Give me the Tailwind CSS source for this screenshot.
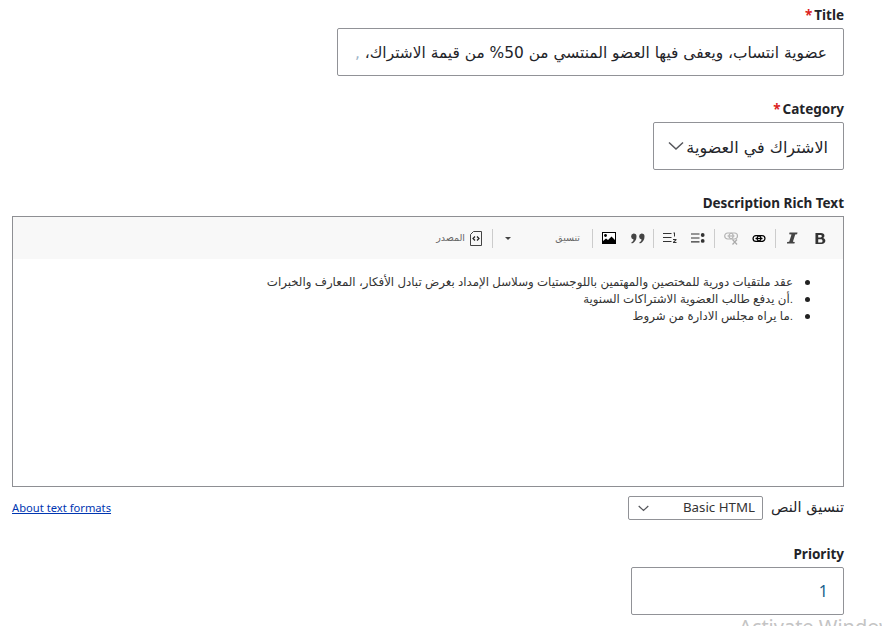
<!DOCTYPE html>
<html lang="ar" dir="rtl">
<head>
<meta charset="utf-8">
<script src="https://cdn.jsdelivr.net/npm/@tailwindcss/browser@4"></script>
</head>
<body class="relative h-[626px] w-[882px] overflow-hidden bg-white font-['Noto_Sans','DejaVu_Sans',sans-serif] text-[#232429]">
<form class="flex flex-col pr-[38px] pl-[12px] pt-[7px]">
  <div class="flex flex-col items-start">
    <label dir="ltr" class="h-[21px] text-[13.5px] leading-[17px] font-bold"><span class="mr-[2px] text-[#dc2323]">*</span>Title</label>
    <div class="flex h-[48px] w-[507px] items-center overflow-hidden rounded-[2px] border border-[#919297] pt-[4px] pr-[16px] pl-[14px] whitespace-nowrap">
      <span class="w-full overflow-hidden font-['DejaVu_Sans',sans-serif] text-[15.4px]">عضوية انتساب، ويعفى فيها العضو المنتسي من 50% من قيمة الاشتراك، <span class="text-[#9db4c8]">,</span></span>
    </div>
  </div>
  <div class="mt-[25px] flex flex-col items-start">
    <label dir="ltr" class="h-[21px] text-[13.5px] leading-[17px] font-bold"><span class="mr-[2px] text-[#dc2323]">*</span>Category</label>
    <div class="flex h-[48px] w-[191px] items-center gap-[2px] rounded-[2px] border border-[#919297] pr-[15px] font-['DejaVu_Sans',sans-serif] text-[16px] whitespace-nowrap">
      <span class="pt-[3px]">الاشتراك في العضوية</span>
      <svg width="16" height="10" viewBox="0 0 16 10" fill="none" stroke="#55565b" stroke-width="1.5"><path d="M1 1.5 L8 8 L15 1.5"/></svg>
    </div>
  </div>
  <div class="mt-[25px] flex flex-col items-start">
    <label dir="ltr" class="h-[21px] text-[13.5px] leading-[17px] font-bold">Description Rich Text</label>
    <div class="flex h-[271px] w-[832px] flex-col border border-[#8e8f93]">
      <div class="flex h-[42px] items-center bg-[#f8f8f8] pr-[9px] text-[#222]">
        <button type="button" class="flex w-[28px] justify-center"><svg width="11" height="13" viewBox="0 0 12 13" fill="#333"><path fill-rule="evenodd" d="M.5 .5h6c2.300 0 3.800 1 3.800 3 0 1.200-.7 2.100-1.700 2.500 1.500.3 2.700 1.300 2.700 3 0 2.200-1.700 3.500-4.200 3.500H.5zM3.500 2.700v2.600h2.500c.9 0 1.400-.5 1.400-1.300S6.900 2.700 6 2.700zM3.500 7.300v3.500h2.900c1.100 0 1.800-.6 1.800-1.700S7.500 7.300 6.400 7.300z"/></svg></button>
        <button type="button" class="flex w-[28px] justify-center"><svg width="11" height="12" viewBox="0 0 11 12" fill="#444"><path d="M2.500.5h8l-.4 1.800-1.900.1-2.300 7.300 1.900.2-.4 1.600H-.2l.4-1.600 2-.2 2.300-7.300-2.300-.1z"/></svg></button>
        <span class="mx-[2px] h-[19px] w-px bg-[#ccc]"></span>
        <button type="button" class="flex w-[28px] justify-center"><svg width="14" height="7" viewBox="0 0 15 8" fill="none" stroke="#000" stroke-width="1.400"><rect x=".7" y=".7" width="9" height="6.600" rx="3.300"/><rect x="5.300" y=".7" width="9" height="6.600" rx="3.300"/><path d="M3.500 4h8"/></svg></button>
        <button type="button" class="flex w-[28px] justify-center"><svg width="15" height="13" viewBox="0 0 15 13" fill="none" stroke="#b4b4b4" stroke-width="1.200"><rect x=".7" y="1" width="8.500" height="6" rx="3"/><rect x="5" y="1" width="8.500" height="6" rx="3"/><path d="M3.500 4h7"/><path d="M8.500 7.500l4.500 5M13 7.500l-4.500 5" stroke="#aaa"/></svg></button>
        <span class="mx-[2px] h-[19px] w-px bg-[#ccc]"></span>
        <button type="button" class="flex w-[28px] justify-center"><svg width="14" height="10" viewBox="0 0 14 10" fill="#333"><path d="M0 .5h8.500v1.100H0zM0 4.400h8.500v1.100H0zM0 8.300h8.500v1.100H0z"/><circle cx="11.700" cy="2" r="1.900"/><circle cx="11.700" cy="7.900" r="1.900"/></svg></button>
        <button type="button" class="flex w-[28px] justify-center"><svg width="14" height="12" viewBox="0 0 14 12" fill="#333"><path d="M0 1h8.500v1.100H0zM0 5h8.500v1.100H0zM0 9h8.500v1.100H0z"/><path d="M10.500 .5h1.500v4h-1V1.500h-.5zM10 7h3.500v.9l-2 2.200h2v.9H10v-.9l2-2.200h-2z"/></svg></button>
        <span class="mx-[2px] h-[19px] w-px bg-[#ccc]"></span>
        <button type="button" class="flex w-[28px] justify-center"><svg width="15" height="11" viewBox="0 0 15 11" fill="#444"><path d="M3.500.5a3 3 0 0 1 3 3.200c0 3-1.700 5.600-4.600 6.800l-.7-1c1.400-.8 2.200-1.900 2.400-3.100A3 3 0 0 1 3.500.5zM11.500.5a3 3 0 0 1 3 3.200c0 3-1.700 5.600-4.600 6.800l-.7-1c1.400-.8 2.200-1.900 2.400-3.100a3 3 0 0 1-.1-5.900z"/></svg></button>
        <button type="button" class="flex w-[28px] justify-center"><svg width="14" height="12" viewBox="0 0 14 12"><rect x=".5" y=".5" width="13" height="11" fill="#fff" stroke="#000"/><circle cx="3.500" cy="3.500" r="1.400" fill="#000"/><path d="M1 11V9l3-2.500 2 1.500 3.500-3.500L13 8v3z" fill="#000"/></svg></button>
        <span class="mx-[2px] h-[19px] w-px bg-[#ccc]"></span>
        <div class="flex w-[95px] items-center justify-between pr-[10px] pl-[10px]">
          <span class="font-['Liberation_Sans','DejaVu_Sans',sans-serif] text-[9.5px] leading-none text-[#666]">تنسيق</span>
          <span class="h-0 w-0 border-x-[3px] border-t-[3px] border-x-transparent border-t-[#444]"></span>
        </div>
        <span class="mx-[2px] h-[19px] w-px bg-[#ccc]"></span>
        <div class="flex items-center gap-[5px] pr-[8px]">
          <svg width="12" height="15" viewBox="0 0 12 15" fill="none" stroke="#444"><path d="M.5 3.500L3.500.5h8v14h-11z"/><path d="M5 5.500L3 7.500l2 2M7 5.500l2 2-2 2" stroke-width="1.200" stroke="#222"/></svg>
          <span class="font-['Liberation_Sans','DejaVu_Sans',sans-serif] text-[9.5px] leading-none text-[#666]">المصدر</span>
        </div>
      </div>
      <ul class="flex flex-col pt-[15px] pr-[33px] font-['Liberation_Sans','DejaVu_Sans',sans-serif] text-[11.8px] leading-[17px] text-[#333]">
        <li class="flex items-center gap-[12px]"><span class="size-[5px] rounded-full bg-[#222]"></span><span>عقد ملتقيات دورية للمختصين والمهتمين باللوجستيات وسلاسل الإمداد بغرض تبادل الأفكار، المعارف والخبرات</span></li>
        <li class="flex items-center gap-[12px]"><span class="size-[5px] rounded-full bg-[#222]"></span><span>.أن يدفع طالب العضوية الاشتراكات السنوية</span></li>
        <li class="flex items-center gap-[12px]"><span class="size-[5px] rounded-full bg-[#222]"></span><span>.ما يراه مجلس الادارة من شروط</span></li>
      </ul>
    </div>
    <div class="mt-[9px] flex h-[24px] w-[832px] items-center justify-between">
      <div class="flex items-center gap-[8px]">
        <label class="font-['DejaVu_Sans',sans-serif] text-[14.5px]">تنسيق النص</label>
        <div dir="ltr" class="flex h-[24px] w-[135px] items-center justify-between rounded-[2px] border border-[#919297] pr-[7px] pl-[9px] text-[13.3px] text-[#333]">
          <svg width="11" height="7" viewBox="0 0 11 7" fill="none" stroke="#55565b" stroke-width="1.200"><path d="M.7 1L5.500 5.500 10.300 1"/></svg>
          <span>Basic HTML</span>
        </div>
      </div>
      <a dir="ltr" href="#" class="text-[11.200px] text-[#0036b1] underline">About text formats</a>
    </div>
  </div>
  <div class="mt-[26px] flex flex-col items-start">
    <label dir="ltr" class="h-[21px] text-[13.5px] leading-[17px] font-bold">Priority</label>
    <div class="flex h-[48px] w-[213px] items-center rounded-[2px] border border-[#919297] pr-[15px] text-[16px] text-[#1b5f8c]">1</div>
  </div>
</form>
<div dir="ltr" class="absolute top-[612px] left-[739px] text-[20px] whitespace-nowrap text-[#c4c4c4]">Activate Windows</div>
</body>
</html>
